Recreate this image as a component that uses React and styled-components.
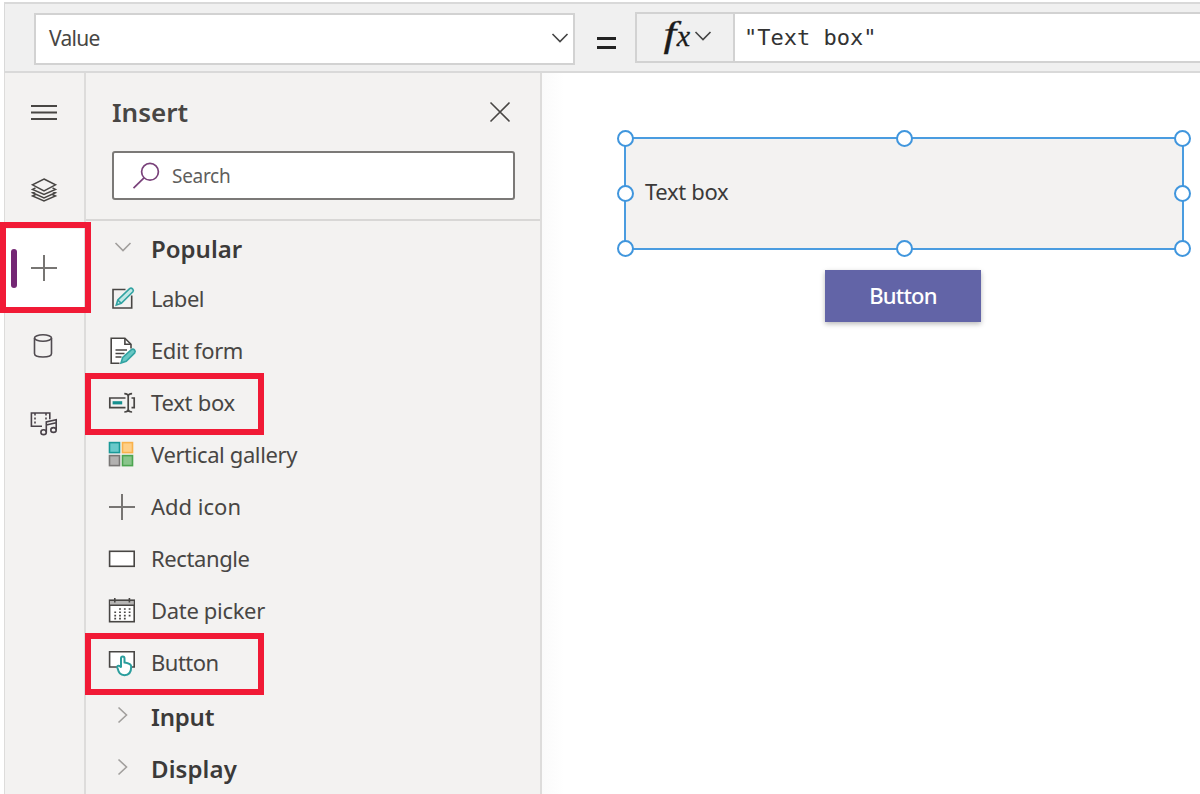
import React from 'react';
import styled, { createGlobalStyle } from 'styled-components';

const sans = "'Noto Sans', 'Open Sans', sans-serif";

const GlobalStyle = createGlobalStyle`
  *, *::before, *::after { box-sizing: border-box; }
  html, body { margin: 0; padding: 0; background: #fff; }
  body { overflow: hidden; }
`;

const Page = styled.div`
  display: flex;
  flex-direction: column;
  width: 1200px;
  height: 794px;
  padding-left: 4px;
  overflow: hidden;
  position: relative;
  background: #fff;
  font-family: ${sans};
  color: #3b3a39;
`;

const FormulaBar = styled.header`
  flex: none;
  display: flex;
  align-items: flex-start;
  height: 71px;
  margin-top: 2px;
  padding: 8px 0 0 29px;
  background: #f0f0f0;
  border: 2px solid #d9d9d9;
  border-left-width: 1px;
  border-right: 0;
`;

const PropertySelect = styled.div`
  display: flex;
  align-items: center;
  justify-content: space-between;
  width: 541px;
  height: 52px;
  margin-top: 1px;
  padding: 0 5px 3px 13px;
  background: #fff;
  border: 2px solid #d2d2d2;
`;

const Text = styled.span`
  font-size: ${(p) => p.$size || 22}px;
  line-height: 30px;
  letter-spacing: ${(p) => p.$track || 0}px;
  font-weight: ${(p) => p.$weight || 400};
  color: ${(p) => p.$color || '#484644'};
  white-space: pre;
`;

const EqualsSign = styled.div`
  width: 19px;
  height: 12px;
  margin: 25px 19px 0 22px;
  border: solid #222;
  border-width: 3px 0;
`;

const FxButton = styled.div`
  display: flex;
  align-items: center;
  width: 98px;
  height: 51px;
  padding: 0 0 3px 25px;
  gap: 6px;
  border: 2px solid #d2d2d2;
  border-right: 0;
`;

const FxMark = styled.span`
  display: flex;
  align-items: baseline;
  width: 27px;
  height: 43px;
  font-family: 'Liberation Serif', serif;
  font-style: italic;
  line-height: 39px;
  color: #1b1b1b;
  -webkit-text-stroke: 0.3px #1b1b1b;
`;

const FxLetter = styled.span`
  font-size: ${(p) => p.$size}px;
  margin-left: ${(p) => p.$shift || 0}px;
  transform: scaleX(${(p) => p.$stretch || 1});
`;

const FormulaInput = styled.div`
  flex: 1;
  height: 51px;
  padding: 0 0 0 9px;
  font: 22px/47px 'DejaVu Sans Mono', monospace;
  color: #333;
  white-space: pre;
  background: #fff;
  border: 2px solid #d2d2d2;
  border-right: 0;
`;

const Workspace = styled.main`
  flex: 1;
  display: flex;
  min-height: 0;
`;

const Rail = styled.nav`
  flex: none;
  width: 82px;
  background: #f3f2f1;
  border: solid #dddcdb;
  border-width: 0 2px 0 1px;
`;

const RailItem = styled.div`
  display: flex;
  align-items: center;
  height: 78px;
  padding-left: ${(p) => (p.$active ? 6 : 24)}px;
  background: ${(p) => (p.$active ? '#fff' : 'transparent')};
`;

const ActiveMark = styled.span`
  width: 6px;
  height: 39px;
  margin-right: 12px;
  border-radius: 3px;
  background: #742774;
`;

const InsertPanel = styled.aside`
  flex: none;
  width: 456px;
  background: #f3f2f1;
  border-right: 2px solid #dddcdb;
`;

const PanelTop = styled.div`
  height: 148px;
  padding: 24px 25px 0 26px;
  border-bottom: 2px solid #d8d7d6;
`;

const PanelHeading = styled.div`
  display: flex;
  align-items: center;
  justify-content: space-between;
  height: 30px;
  margin-bottom: 24px;
  padding-right: 5px;
`;

const SearchBox = styled.div`
  display: flex;
  align-items: center;
  width: 403px;
  height: 49px;
  padding-left: 18px;
  gap: 10px;
  background: #fff;
  border: 2px solid #7b7977;
  border-radius: 3px;
`;

const List = styled.div`
  display: flex;
  flex-direction: column;
  padding-top: 3px;
`;

const Row = styled.div`
  flex: none;
  display: flex;
  align-items: center;
  height: ${(p) => p.$height || 52}px;
  padding-left: 21px;
`;

const IconSlot = styled.span`
  flex: none;
  display: flex;
  width: 30px;
  height: 30px;
  margin-right: 14px;
`;

const RowLabel = styled(Text)`
  padding-bottom: 2px;
`;

const Canvas = styled.section`
  flex: 1;
  padding: 64px 0 0 82px;
  background: linear-gradient(90deg, #fafafa, #fff 22px);
`;

const SelectedTextBox = styled.div`
  position: relative;
  display: flex;
  align-items: center;
  width: 560px;
  height: 113px;
  padding: 0 0 6px 19px;
  background: #f3f2f1;
  border: 2px solid #4a9ce0;
`;

const Handle = styled.i`
  position: absolute;
  left: ${(p) => p.$x}px;
  top: ${(p) => p.$y}px;
  width: 17px;
  height: 17px;
  border: 2px solid #4096dd;
  border-radius: 50%;
  background: #fff;
`;

const CanvasButton = styled.div`
  display: flex;
  align-items: center;
  justify-content: center;
  width: 156px;
  height: 52px;
  margin: 20px 0 0 201px;
  padding-bottom: 2px;
  background: #6264a7;
  box-shadow: 0 2px 5px rgba(0, 0, 0, 0.28);
`;

const Callout = styled.div`
  position: absolute;
  left: ${(p) => p.$x}px;
  top: ${(p) => p.$y}px;
  width: ${(p) => p.$w}px;
  height: ${(p) => p.$h}px;
  border: 6px solid #f11a36;
  pointer-events: none;
`;

const Svg = styled.svg`
  display: block;
  flex: none;
  fill: none;
  stroke: ${(p) => p.$stroke || '#484644'};
  stroke-width: ${(p) => p.$weight || 1.6};
  overflow: visible;
`;

const Chevron = ({ right, color = '#444', w = 16 }) => (
  <Svg width={w} height={w} viewBox="0 0 16 16" $stroke={color}>
    <path d={right ? 'M3.5 0.5 L11.5 8 L3.5 15.5' : 'M0.5 4 L8 11.5 L15.5 4'} />
  </Svg>
);

const MenuIcon = () => (
  <Svg width="30" height="30" viewBox="0 0 30 30" $weight={1.8}>
    <path d="M2 9H28M2 15.5H28M2 22H28" />
  </Svg>
);

const LayersIcon = () => (
  <Svg width="30" height="30" viewBox="0 0 30 30" $weight={1.5}>
    <path d="M15 4 L26.5 9.8 L15 15.8 L3.5 9.8Z" />
    <path d="M6.5 12.8 L3.5 14.4 L15 19.5 L26.5 14.4 L23.5 12.8M6.5 16.3 L3.5 17.8 L15 22.9 L26.5 17.8 L23.5 16.3M6.5 19.5 L3.5 21 L15 26 L26.5 21 L23.5 19.5" />
  </Svg>
);

const PlusIcon = () => (
  <Svg width="30" height="30" viewBox="0 0 30 30" $stroke="#777573" $weight={2}>
    <path d="M2 15H28M15 2V28" />
  </Svg>
);

const DatabaseIcon = () => (
  <Svg width="30" height="30" viewBox="0 0 30 30" $stroke="#504b50">
    <ellipse cx="14" cy="7" rx="8.5" ry="3.2" />
    <path d="M5.5 7V22.5C5.5 24.8 9 26 14 26S22.5 24.8 22.5 22.5V7" />
  </Svg>
);

const MediaIcon = () => (
  <Svg width="30" height="30" viewBox="0 0 30 30" $stroke="#494249">
    <path d="M13 17.2H2.4V4H20.8V10.2M6 4.5V6.5M6 8.5V10.5M6 12.5V14.5M17 4.5V6.5M17 8.5V10.5" />
    <path d="M17.3 23.2V13L27.2 10.7V20.7M17.3 16L27.2 13.7" />
    <ellipse cx="14.6" cy="23.2" rx="2.7" ry="2.4" />
    <ellipse cx="24.5" cy="21" rx="2.7" ry="2.4" />
  </Svg>
);

const LabelIcon = () => (
  <Svg width="30" height="30" viewBox="0 0 30 30">
    <path d="M18.5 5.5H6V24H24.7V11.5" />
    <path d="M9.3 21L10.8 16L22.6 4.6C24.6 3.1 27.4 5.6 25.9 7.8L14.3 19.4Z" stroke="#31a3a2" fill="#c3e8e6" />
    <path d="M10.8 16L14.3 19.4" stroke="#31a3a2" />
  </Svg>
);

const FormIcon = () => (
  <Svg width="30" height="30" viewBox="0 0 30 30">
    <path d="M12.5 27.2H4.2V2.2H17.9L24 8.3V12.5" fill="#fff" />
    <path d="M17.9 2.2V8.3H24M8.5 14H20M8.5 17.5H17.5M8.5 21H14.5" />
    <path d="M14 26.9L15.7 21.5L24.4 13.6C26.6 12.1 29.2 14.6 27.7 16.9L19.2 25.2Z" stroke="#31a3a2" fill="#68c7c4" />
  </Svg>
);

const TextBoxIcon = () => (
  <Svg width="30" height="30" viewBox="0 0 30 30" $weight={1.7}>
    <path d="M18.5 10H2.8V19.7H18.5M24.5 10H27.2V19.7H24.5M17.3 5.7C19.6 5.7 21.2 6.5 21.2 8.5V21C21.2 23.1 19.6 24 17.3 24M25.1 5.7C22.8 5.7 21.2 6.5 21.2 8.5V21C21.2 23.1 22.8 24 25.1 24" />
    <path d="M5.6 14.8H15.2" stroke="#158f8e" strokeWidth="3.2" />
  </Svg>
);

const GalleryIcon = () => (
  <Svg width="30" height="30" viewBox="0 0 30 30">
    <rect x="2.5" y="2.6" width="10" height="10" fill="#69c9ca" stroke="#199998" />
    <rect x="15.5" y="2.6" width="10" height="10" fill="#ffcf87" stroke="#f9b24c" />
    <rect x="2.5" y="15.6" width="10" height="10" fill="#b2b1b0" stroke="#777574" />
    <rect x="15.5" y="15.6" width="10" height="10" fill="#89c58b" stroke="#4ca550" />
  </Svg>
);

const RectangleIcon = () => (
  <Svg width="30" height="30" viewBox="0 0 30 30">
    <rect x="2.6" y="7.3" width="24.6" height="15" fill="#fff" />
  </Svg>
);

const CalendarIcon = () => (
  <Svg width="30" height="30" viewBox="0 0 30 30">
    <rect x="2.6" y="4.2" width="24.6" height="21.5" fill="#fff" />
    <rect x="3.4" y="5" width="23" height="4" fill="#b6b5b4" stroke="none" />
    <path d="M3 9.3H27M7.8 2V6.5M22.4 2V6.5" />
    <path d="M12.1 13H23.5M7.3 16.3H23.5M7.3 19.6H23.5M7.3 22.6H18.8" strokeDasharray="1.8 3" />
  </Svg>
);

const ButtonIcon = () => (
  <Svg width="30" height="30" viewBox="0 0 30 30">
    <path d="M10 19H2.6V3.8H27.2V19H25" fill="#fff" />
    <path
      d="M14 19.5V10.5C14 7.9 17.5 7.9 17.5 10.5V14.5C21.8 15.2 24.2 16 24.2 18.5C24.2 24 22.3 27.2 17.5 27.2C13.3 27.2 11.8 25 10.3 19.5C9.9 17.3 12.6 16.8 14 19.5Z"
      fill="#fff"
      stroke="#2b9e9d"
      strokeWidth="2"
    />
  </Svg>
);

const CloseIcon = () => (
  <Svg width="20" height="20" viewBox="0 0 20 20" $weight={1.6}>
    <path d="M0.5 0.5L19.5 19.5M19.5 0.5L0.5 19.5" />
  </Svg>
);

const SearchIcon = () => (
  <Svg width="30" height="30" viewBox="0 0 30 30" $stroke="#79417a" $weight={1.7}>
    <circle cx="18" cy="10.8" r="8.4" />
    <path d="M12 16.8L1.5 27.2" />
  </Svg>
);

const tools = [
  ['Label', LabelIcon, -0.5],
  ['Edit form', FormIcon, -0.4],
  ['Text box', TextBoxIcon, -0.25],
  ['Vertical gallery', GalleryIcon, -0.38],
  ['Add icon', PlusIcon, 0],
  ['Rectangle', RectangleIcon, -0.4],
  ['Date picker', CalendarIcon, -0.32],
  ['Button', ButtonIcon, -0.5],
];

const handles = [
  [-9.5, -9], [270, -9], [547.5, -9],
  [-9.5, 46], [547.5, 46],
  [-9.5, 101], [270, 101], [547.5, 101],
];

const callouts = [
  [0, 222, 91, 91],
  [85, 373, 179, 62],
  [85, 633, 179, 62],
];

const ChevronHolder = styled.span`
  display: flex;
  padding: 5px 0 0 8px;
`;

const Group = ({ name, open, height, track }) => (
  <Row $height={height}>
    <IconSlot>
      <ChevronHolder>
        <Chevron right={!open} color="#a19f9d" />
      </ChevronHolder>
    </IconSlot>
    <Text $size={24} $weight={600} $track={track} $color="#3b3a39">{name}</Text>
  </Row>
);

export default function App() {
  return (
    <Page>
      <GlobalStyle />
      <FormulaBar>
        <PropertySelect>
          <Text $size={21} $track={-0.7}>Value</Text>
          <Chevron />
        </PropertySelect>
        <EqualsSign />
        <FxButton>
          <FxMark>
            <FxLetter $size={35} $shift={3} $stretch={1.3}>f</FxLetter>
            <FxLetter $size={30} $shift={2}>x</FxLetter>
          </FxMark>
          <Chevron />
        </FxButton>
        <FormulaInput>"Text box"</FormulaInput>
      </FormulaBar>

      <Workspace>
        <Rail>
          <RailItem><MenuIcon /></RailItem>
          <RailItem><LayersIcon /></RailItem>
          <RailItem $active><ActiveMark /><PlusIcon /></RailItem>
          <RailItem><DatabaseIcon /></RailItem>
          <RailItem><MediaIcon /></RailItem>
        </Rail>

        <InsertPanel>
          <PanelTop>
            <PanelHeading>
              <Text $size={26} $weight={600}>Insert</Text>
              <CloseIcon />
            </PanelHeading>
            <SearchBox>
              <SearchIcon />
              <Text $size={19} $track={-0.3} $color="#605e5c">Search</Text>
            </SearchBox>
          </PanelTop>
          <List>
            <Group name="Popular" open height={49} track={0} />
            {tools.map(([name, Icon, track]) => (
              <Row key={name}>
                <IconSlot><Icon /></IconSlot>
                <RowLabel $track={track}>{name}</RowLabel>
              </Row>
            ))}
            <Group name="Input" height={55} track={-0.2} />
            <Group name="Display" height={50} track={0.1} />
          </List>
        </InsertPanel>

        <Canvas>
          <SelectedTextBox>
            <Text $track={-0.35} $color="#3b3a39">Text box</Text>
            {handles.map(([x, y]) => (
              <Handle key={`${x},${y}`} $x={x} $y={y} />
            ))}
          </SelectedTextBox>
          <CanvasButton>
            <Text $weight={500} $track={-0.8} $color="#fff">Button</Text>
          </CanvasButton>
        </Canvas>
      </Workspace>

      {callouts.map(([x, y, w, h]) => (
        <Callout key={`${x},${y}`} $x={x} $y={y} $w={w} $h={h} />
      ))}
    </Page>
  );
}
